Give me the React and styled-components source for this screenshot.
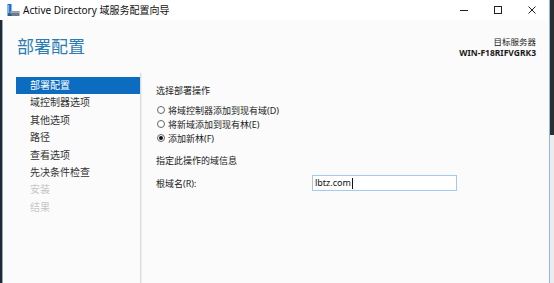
import React from 'react'
import styled, { createGlobalStyle } from 'styled-components'

const GlobalStyle = createGlobalStyle`
  html, body { margin: 0; padding: 0; background: #fafafa; }
  body { font-family: "Noto Sans", "Noto Sans CJK SC", sans-serif; }
`;

const Screen = styled.div`
  width: 554px;
  height: 283px;
  display: flex;
  overflow: hidden;
`;

const LeftEdge = styled.div`
  width: 3px;
  display: flex;
  flex-direction: column;
  &::before { content: ''; height: 20px; background: #fff; }
  &::after { content: ''; flex: 1; background: #1c2a3a; border-right: 1px solid #9aa6b2; }
`;

const RightEdge = styled.div`
  width: 4px;
  border-left: 1px solid #8fb8e4;
  display: flex;
  flex-direction: column;
  &::before { content: ''; height: 135px; background: #2a2d31; }
  &::after { content: ''; flex: 1; background: #ececec; }
`;

const Window = styled.div`
  flex: 1;
  display: flex;
  flex-direction: column;
  background: #fbfbfb;
`;

const TitleBar = styled.div`
  height: 20px;
  background: #fff;
  display: flex;
  align-items: center;
  padding-left: 4px;
  color: #111;
  font-size: 10px;
`;

const TitleText = styled.span`
  margin-left: 3px;
  margin-top: -1px;
`;

const Controls = styled.div`
  margin-left: auto;
  display: flex;
  align-items: center;
  height: 100%;
`;

const CtrlBtn = styled.div`
  width: 34px;
  height: 100%;
  display: flex;
  align-items: center;
  justify-content: center;
`;

const Header = styled.div`
  display: flex;
  justify-content: space-between;
  padding: 18px 13px 0 14px;
  height: 35px;
`;

const PageTitle = styled.h1`
  margin: 0;
  font-weight: 400;
  font-size: 17px;
  line-height: 17px;
  color: #2b7bb4;
`;

const Target = styled.div`
  text-align: right;
  font-size: 8.5px;
  line-height: 11px;
  color: #1a1a1a;
  margin-top: -2px;
`;

const TargetName = styled.div`
  font-weight: 700;
`;

const Main = styled.div`
  flex: 1;
  display: flex;
`;

const Nav = styled.div`
  width: 124px;
  margin-left: 13px;
  padding-top: 4px;
`;

const NavItem = styled.div`
  height: 17.4px;
  line-height: 17.4px;
  padding-left: 14px;
  font-size: 10px;
  color: ${p => (p.$active ? '#fff' : p.$disabled ? '#c6c6c6' : '#333')};
  background: ${p => (p.$active ? '#0c6cbf' : 'transparent')};
`;

const Divider = styled.div`
  width: 1px;
  background: #dcdcdc;
  border-right: 1px solid #efefef;
`;

const Content = styled.div`
  flex: 1;
  padding: 12px 0 0 14px;
  font-size: 9px;
  color: #222;
`;

const Label = styled.div`
  line-height: 12px;
  margin-bottom: ${p => p.$gap || 0}px;
`;

const RadioRow = styled.label`
  display: flex;
  align-items: center;
  height: 14px;
  padding-left: 1px;
`;

const RadioDot = styled.span`
  width: 8px;
  height: 8px;
  box-sizing: border-box;
  border: 1px solid #666;
  border-radius: 50%;
  background: #fff;
  margin-right: 3px;
  display: flex;
  align-items: center;
  justify-content: center;
  &::after {
    content: '';
    width: 4px;
    height: 4px;
    border-radius: 50%;
    background: ${p => (p.$checked ? '#111' : 'transparent')};
  }
`;

const Radios = styled.div`
  margin-bottom: 10px;
`;

const FieldRow = styled.div`
  display: flex;
  align-items: center;
`;

const FieldLabel = styled.div`
  width: 156px;
`;

const Input = styled.div`
  width: 141px;
  height: 14px;
  border: 1px solid #a6c8ea;
  background: #fff;
  padding-left: 2px;
  line-height: 14px;
  font-size: 9px;
  color: #111;
  display: flex;
  align-items: center;
`;

const Caret = styled.span`
  width: 1px;
  height: 11px;
  background: #111;
  margin-left: 1px;
`;

const AdIcon = () => (
  <svg width="13" height="13" viewBox="0 0 13 13">
    <rect x="0.5" y="0" width="4" height="10" fill="#1f6fc5" />
    <rect x="1" y="1" width="1.2" height="8" fill="#7fb6ee" />
    <rect x="3" y="7" width="9.5" height="5" fill="#6e7b88" />
    <rect x="3.5" y="7.5" width="8.5" height="1.2" fill="#b9c3cc" />
    <rect x="0.5" y="10" width="4" height="2" fill="#2a5a90" />
  </svg>
);

const navItems = [
  { label: '部署配置', active: true },
  { label: '域控制器选项' },
  { label: '其他选项' },
  { label: '路径' },
  { label: '查看选项' },
  { label: '先决条件检查' },
  { label: '安装', disabled: true },
  { label: '结果', disabled: true },
];

const ops = [
  { label: '将域控制器添加到现有域(D)' },
  { label: '将新域添加到现有林(E)' },
  { label: '添加新林(F)', checked: true },
];

export default function App() {
  return (
    <Screen>
      <GlobalStyle />
      <LeftEdge />
      <Window>
        <TitleBar>
          <AdIcon />
          <TitleText>Active Directory 域服务配置向导</TitleText>
          <Controls>
            <CtrlBtn>
              <svg width="10" height="10" viewBox="0 0 10 10"><path d="M1 5.5h8" stroke="#222" strokeWidth="1" /></svg>
            </CtrlBtn>
            <CtrlBtn>
              <svg width="10" height="10" viewBox="0 0 10 10"><rect x="1.5" y="1.5" width="7" height="7" fill="none" stroke="#222" strokeWidth="1" /></svg>
            </CtrlBtn>
            <CtrlBtn>
              <svg width="10" height="10" viewBox="0 0 10 10"><path d="M1.5 1.5l7 7M8.5 1.5l-7 7" stroke="#222" strokeWidth="1" /></svg>
            </CtrlBtn>
          </Controls>
        </TitleBar>
        <Header>
          <PageTitle>部署配置</PageTitle>
          <Target>
            <div>目标服务器</div>
            <TargetName>WIN-F18RIFVGRK3</TargetName>
          </Target>
        </Header>
        <Main>
          <Nav>
            {navItems.map(n => (
              <NavItem key={n.label} $active={n.active} $disabled={n.disabled}>{n.label}</NavItem>
            ))}
          </Nav>
          <Divider />
          <Content>
            <Label $gap={6}>选择部署操作</Label>
            <Radios>
              {ops.map(o => (
                <RadioRow key={o.label}>
                  <RadioDot $checked={o.checked} />
                  {o.label}
                </RadioRow>
              ))}
            </Radios>
            <Label $gap={8}>指定此操作的域信息</Label>
            <FieldRow>
              <FieldLabel>根域名(R):</FieldLabel>
              <Input>lbtz.com<Caret /></Input>
            </FieldRow>
          </Content>
        </Main>
      </Window>
      <RightEdge />
    </Screen>
  )
}
